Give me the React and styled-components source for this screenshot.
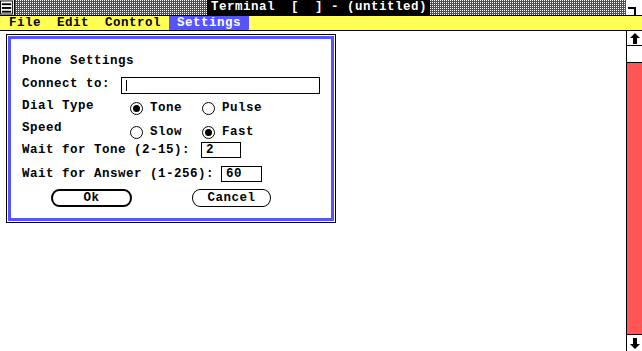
import React from "react";
import styled, { createGlobalStyle } from "styled-components";

const GlobalStyle = createGlobalStyle`
  html, body { margin: 0; padding: 0; background: #fff; overflow: hidden; }
  body {
    font-family: "Liberation Mono", "DejaVu Sans Mono", monospace;
    font-weight: bold;
    font-size: 12.5px;
    letter-spacing: 0.5px;
    color: #000;
  }
  * { box-sizing: border-box; }
`;

const Window = styled.div`
  width: 642px;
  height: 351px;
  display: flex;
  flex-direction: column;
  background: #fff;
`;

const TitleBar = styled.div`
  height: 16px;
  display: flex;
  border-bottom: 1px solid #000;
  background: conic-gradient(from 0deg at 1px 1px, #3c3ce8 0 75%, #ffffff 0) 0 0 / 2px 2px;
`;

const SysBox = styled.div`
  width: 15px;
  background: #fff;
  border-right: 1px solid #000;
  display: flex;
`;

const TitleArea = styled.div`
  flex: 1;
  display: flex;
  justify-content: center;
`;

const TitleText = styled.div`
  background: #000;
  color: #fff;
  line-height: 15px;
  padding: 0 3px 0 4px;
  white-space: pre;
  margin-right: 4px;
`;

const SizeBox = styled.div`
  width: 16px;
  background: #fff;
  display: flex;
`;

const MenuBar = styled.div`
  height: 15px;
  background: #ffff55;
  border-bottom: 1px solid #000;
  display: flex;
  padding-left: 1px;
`;

const MenuItem = styled.div`
  padding: 0 8px;
  line-height: 14px;
  background: ${(p) => (p.$active ? "#5555ff" : "transparent")};
  color: ${(p) => (p.$active ? "#fff" : "#000")};
`;

const Body = styled.div`
  flex: 1;
  display: flex;
  min-height: 0;
`;

const ClientArea = styled.div`
  flex: 1;
  padding: 3px 0 0 6px;
`;

const ScrollBar = styled.div`
  width: 16px;
  border-left: 1px solid #000;
  display: flex;
  flex-direction: column;
`;

const ScrollButton = styled.div`
  height: ${(p) => p.$h}px;
  display: flex;
  align-items: center;
  justify-content: center;
  background: #fff;
  border-top: ${(p) => (p.$top ? "1px solid #000" : "none")};
  border-bottom: ${(p) => (p.$bottom ? "1px solid #000" : "none")};
`;

const Track = styled.div`
  flex: 1;
  background: #ff5555;
`;

const DialogOuter = styled.div`
  width: 330px;
  border: 1px solid #000;
  padding: 1px;
  background: #fff;
`;

const DialogInner = styled.div`
  border: 3px solid #5555ff;
  padding: 14px 11px 11px 11px;
  display: flex;
  flex-direction: column;
`;

const Heading = styled.div`
  line-height: 16px;
  height: 16px;
`;

const Row = styled.div`
  display: flex;
  align-items: ${(p) => (p.$center ? "center" : "flex-start")};
  margin-top: ${(p) => p.$mt}px;
`;

const Label = styled.div`
  width: ${(p) => p.$w}px;
  flex: none;
  line-height: 16px;
  white-space: pre;
`;

const TextBox = styled.div`
  width: ${(p) => p.$w}px;
  height: ${(p) => p.$h}px;
  margin-top: ${(p) => p.$mt || 0}px;
  border: 1px solid #000;
  padding-left: 4px;
  display: flex;
  align-items: center;
  line-height: 14px;
`;

const Caret = styled.span`
  display: inline-block;
  width: 1px;
  height: 11px;
  background: #000;
`;

const RadioGroup = styled.div`
  display: flex;
  margin-top: ${(p) => p.$mt}px;
`;

const RadioItem = styled.div`
  width: 72px;
  height: 16px;
  display: flex;
  align-items: center;
`;

const Circle = styled.span`
  width: 13px;
  height: 13px;
  border: 1px solid #000;
  border-radius: 50%;
  display: flex;
  align-items: center;
  justify-content: center;
  margin-right: 7px;
  &::after {
    content: "";
    width: 7px;
    height: 7px;
    border-radius: 50%;
    background: ${(p) => (p.$on ? "#000" : "transparent")};
  }
`;

const RadioText = styled.span`
  line-height: 16px;
`;

const ButtonRow = styled.div`
  display: flex;
  margin-top: 7px;
  padding-left: 29px;
  gap: 60px;
`;

const Button = styled.div`
  width: ${(p) => p.$w}px;
  height: 18px;
  border: ${(p) => (p.$default ? 2 : 1)}px solid #000;
  border-radius: 8px / 9px;
  display: flex;
  align-items: center;
  justify-content: center;
  line-height: 14px;
`;

const UpArrow = () => (
  <svg width="10" height="11" viewBox="0 0 10 11">
    <path d="M5 0 L10 5 H7 V11 H3 V5 H0 Z" fill="#000" />
  </svg>
);

const DownArrow = () => (
  <svg width="10" height="11" viewBox="0 0 10 11">
    <path d="M5 11 L10 6 H7 V0 H3 V6 H0 Z" fill="#000" />
  </svg>
);

const SysIcon = () => (
  <svg width="15" height="15" viewBox="0 0 15 15">
    <rect x="0.5" y="0.5" width="13" height="14" fill="#fff" stroke="#000" />
    <rect x="2" y="3" width="10" height="2" fill="#000" />
    <rect x="2" y="7" width="10" height="2" fill="#000" />
    <rect x="2" y="11" width="10" height="2" fill="#000" />
  </svg>
);

const SizeIcon = () => (
  <svg width="16" height="15" viewBox="0 0 16 15">
    <path d="M2 8 H9 V15" fill="none" stroke="#000" strokeWidth="2" />
  </svg>
);

const Radio = ({ on, children }) => (
  <RadioItem>
    <Circle $on={on} />
    <RadioText>{children}</RadioText>
  </RadioItem>
);

export default function App() {
  return (
    <>
      <GlobalStyle />
      <Window>
        <TitleBar>
          <SysBox>
            <SysIcon />
          </SysBox>
          <TitleArea>
            <TitleText>{"Terminal  [  ] - (untitled)"}</TitleText>
          </TitleArea>
          <SizeBox>
            <SizeIcon />
          </SizeBox>
        </TitleBar>
        <MenuBar>
          <MenuItem>File</MenuItem>
          <MenuItem>Edit</MenuItem>
          <MenuItem>Control</MenuItem>
          <MenuItem $active>Settings</MenuItem>
        </MenuBar>
        <Body>
          <ClientArea>
            <DialogOuter>
              <DialogInner>
                <Heading>Phone Settings</Heading>
                <Row $mt={7}>
                  <Label $w={99}>Connect to:</Label>
                  <TextBox $w={201} $h={17} $mt={1}>
                    <Caret />
                  </TextBox>
                </Row>
                <Row $mt={4}>
                  <Label $w={108}>Dial Type</Label>
                  <RadioGroup $mt={2}>
                    <Radio on>Tone</Radio>
                    <Radio>Pulse</Radio>
                  </RadioGroup>
                </Row>
                <Row $mt={4}>
                  <Label $w={108}>Speed</Label>
                  <RadioGroup $mt={4}>
                    <Radio>Slow</Radio>
                    <Radio on>Fast</Radio>
                  </RadioGroup>
                </Row>
                <Row $mt={2} $center>
                  <Label $w={179}>Wait for Tone (2-15):</Label>
                  <TextBox $w={40} $h={16}>2</TextBox>
                </Row>
                <Row $mt={8} $center>
                  <Label $w={199}>Wait for Answer (1-256):</Label>
                  <TextBox $w={41} $h={16}>60</TextBox>
                </Row>
                <ButtonRow>
                  <Button $w={81} $default>Ok</Button>
                  <Button $w={79}>Cancel</Button>
                </ButtonRow>
              </DialogInner>
            </DialogOuter>
          </ClientArea>
          <ScrollBar>
            <ScrollButton $h={15} $bottom>
              <UpArrow />
            </ScrollButton>
            <ScrollButton $h={17} $bottom />
            <Track />
            <ScrollButton $h={17} $top>
              <DownArrow />
            </ScrollButton>
          </ScrollBar>
        </Body>
      </Window>
    </>
  );
}
